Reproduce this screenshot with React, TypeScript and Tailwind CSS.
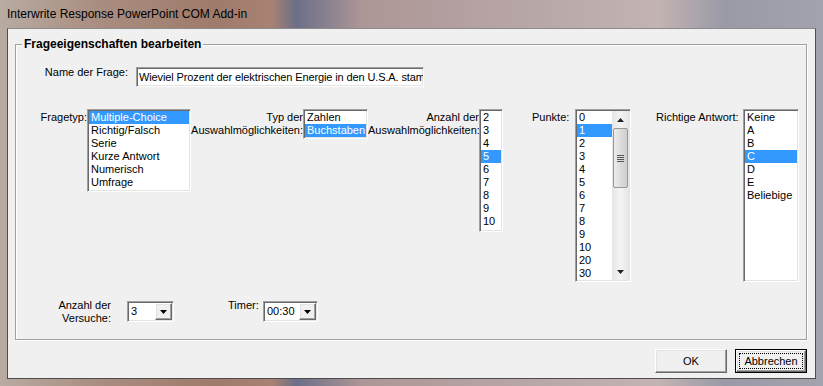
import type { ReactNode } from 'react'

const font = "font-['Liberation_Sans',Arial,sans-serif]"

const sunken =
  'border border-t-[#a0a0a0] border-l-[#a0a0a0] border-r-white border-b-white shadow-[inset_1px_1px_0_#696969,inset_-1px_-1px_0_#e3e3e3]'

const raised =
  'border border-t-white border-l-white border-r-[#696969] border-b-[#696969] shadow-[inset_-1px_-1px_0_#a0a0a0,inset_1px_1px_0_#e3e3e3]'

interface ListBoxProps {
  items: string[]
  selected: number
  className: string
  scroll?: boolean
}

function ListBox({ items, selected, className, scroll }: ListBoxProps) {
  return (
    <div className={`${sunken} flex shrink-0 bg-white p-px ${className}`}>
      <div className="min-w-0 flex-1">
        {items.map((item, index) => (
          <div
            key={item}
            className={`h-[13px] whitespace-nowrap pl-[2px] text-[11px] leading-[13px] ${
              index === selected ? 'bg-[#3399ff] text-white' : 'text-black'
            }`}
          >
            {item}
          </div>
        ))}
      </div>
      {scroll && <ScrollBar />}
    </div>
  )
}

function ScrollBar() {
  return (
    <div className="flex w-[17px] flex-col items-center bg-gradient-to-r from-[#e6e6e6] via-[#f4f4f4] to-[#e6e6e6]">
      <div className="flex h-[17px] w-full items-center justify-center">
        <svg width="7" height="4" viewBox="0 0 7 4">
          <path d="M3.5 0 L7 4 L0 4 Z" fill="#222" />
        </svg>
      </div>
      <div className="flex h-[60px] w-[15px] items-center justify-center rounded-[2px] border border-[#979797] bg-gradient-to-r from-[#ececec] via-[#dcdcdc] to-[#cfcfcf]">
        <div className="flex w-[7px] flex-col gap-[1px]">
          <div className="h-px bg-[#555]" />
          <div className="h-px bg-[#555]" />
          <div className="h-px bg-[#555]" />
          <div className="h-px bg-[#555]" />
        </div>
      </div>
      <div className="flex-1" />
      <div className="flex h-[17px] w-full items-center justify-center">
        <svg width="7" height="4" viewBox="0 0 7 4">
          <path d="M0 0 L7 0 L3.5 4 Z" fill="#222" />
        </svg>
      </div>
    </div>
  )
}

function ComboBox({ value, className }: { value: string; className: string }) {
  return (
    <div className={`${sunken} flex h-[21px] shrink-0 items-stretch bg-white p-px ${className}`}>
      <div className="flex-1 pl-[2px] text-[11px] leading-[17px]">{value}</div>
      <div className={`${raised} flex w-[17px] items-center justify-center bg-[#f0f0f0]`}>
        <svg width="7" height="4" viewBox="0 0 7 4">
          <path d="M0 0 L7 0 L3.5 4 Z" fill="#000" />
        </svg>
      </div>
    </div>
  )
}

function Label({ children, className }: { children: ReactNode; className: string }) {
  return <div className={`shrink-0 text-[11px] leading-[13px] text-black ${className}`}>{children}</div>
}

const points = ['0', '1', '2', '3', '4', '5', '6', '7', '8', '9', '10', '20', '30']

export default function App() {
  return (
    <div
      className={`${font} flex h-[386px] w-[823px] flex-col overflow-hidden bg-[linear-gradient(90deg,#b8aba2_0%,#a98d80_12%,#9f7b6b_26%,#a88272_33%,#6b6f88_36%,#ad9696_44%,#b9a8a8_66%,#c3b3b2_80%,#9a9aa7_88%,#a3a3ad_100%)]`}
    >
      <div className="flex h-[28px] shrink-0 items-center pl-[7px] text-[12px] text-black">
        Interwrite Response PowerPoint COM Add-in
      </div>

      <div className="mx-[7px] mb-[7px] flex flex-1 flex-col border border-[#4d4d4d] border-t-[#8c8c8c] bg-[#f0f0f0]">
        <div className="relative ml-[7px] mt-[15px] h-[296px] w-[792px] border border-[#a0a0a0] shadow-[inset_1px_1px_0_#fff,1px_1px_0_#fff]">
          <div className="absolute -top-[8px] left-[6px] bg-[#f0f0f0] px-[2px] text-[12px] font-bold leading-[15px] text-black">
            Frageeigenschaften bearbeiten
          </div>

          <div className="mt-[22px] flex items-start">
            <Label className="-mt-[1px] w-[120px] pr-[8px] text-right">Name der Frage:</Label>
            <div className={`${sunken} h-[20px] w-[288px] overflow-hidden bg-white pl-[2px] pt-[2px]`}>
              <div className="whitespace-nowrap text-[11px] leading-[14px] tracking-[-0.12px] text-black">
                Wieviel Prozent der elektrischen Energie in den U.S.A. stam
              </div>
            </div>
          </div>

          <div className="mt-[22px] flex items-start">
            <Label className="w-[71px] pt-[2px] text-right">Fragetyp:</Label>
            <ListBox
              className="h-[83px] w-[104px]"
              selected={0}
              items={['Multiple-Choice', 'Richtig/Falsch', 'Serie', 'Kurze Antwort', 'Numerisch', 'Umfrage']}
            />
            <Label className="w-[112px] pt-[2px] text-right">
              Typ der
              <br />
              Auswahlmöglichkeiten:
            </Label>
            <ListBox className="h-[30px] w-[65px]" selected={1} items={['Zahlen', 'Buchstaben']} />
            <Label className="w-[111px] pt-[2px] text-right">
              Anzahl der
              <br />
              Auswahlmöglichkeiten:
            </Label>
            <ListBox
              className="h-[123px] w-[24px]"
              selected={3}
              items={['2', '3', '4', '5', '6', '7', '8', '9', '10']}
            />
            <Label className="w-[72px] pl-[29px] pt-[2px]">Punkte:</Label>
            <ListBox className="h-[173px] w-[56px]" selected={1} items={points} scroll />
            <Label className="w-[112px] pl-[25px] pt-[2px]">Richtige Antwort:</Label>
            <ListBox
              className="h-[173px] w-[56px]"
              selected={3}
              items={['Keine', 'A', 'B', 'C', 'D', 'E', 'Beliebige']}
            />
          </div>

          <div className="mt-[19px] flex items-start">
            <Label className="-mt-[2px] w-[95px] text-right">
              Anzahl der
              <br />
              Versuche:
            </Label>
            <ComboBox className="ml-[16px] w-[47px]" value="3" />
            <Label className="-mt-[2px] ml-[54px] w-[35px]">Timer:</Label>
            <ComboBox className="w-[55px]" value="00:30" />
          </div>
        </div>

        <div className="mr-[8px] mt-[9px] flex justify-end gap-[8px]">
          <button
            type="button"
            className={`${raised} h-[24px] w-[72px] bg-[#f0f0f0] text-[11px] text-black`}
          >
            OK
          </button>
          <button
            type="button"
            className="flex h-[24px] w-[72px] items-stretch border border-black bg-[#f0f0f0] text-[11px] text-black"
          >
            <span className={`${raised} flex flex-1 p-[2px]`}>
              <span className="flex flex-1 items-center justify-center border border-dotted border-black">
                Abbrechen
              </span>
            </span>
          </button>
        </div>
      </div>
    </div>
  )
}
